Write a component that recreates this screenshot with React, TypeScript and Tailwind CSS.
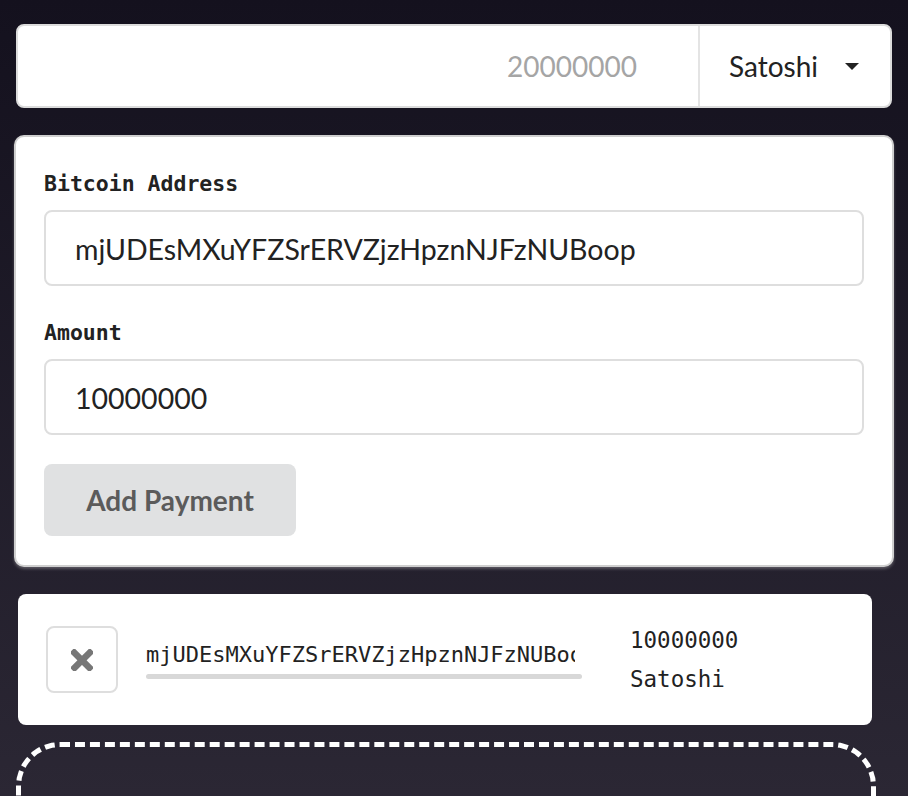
const lato = { fontFamily: "Lato, 'Noto Sans', sans-serif" };

const ADDRESS = "mjUDEsMXuYFZSrERVZjzHpznNJFzNUBoop";

function Field({ label, value }: { label: string; value: string }) {
  return (
    <div className="flex flex-col gap-[13px]">
      <label className="font-['DejaVu_Sans_Mono',monospace] font-bold text-[21.5px] leading-[26px] text-[#222]">
        {label}
      </label>
      <div className="h-[76px] rounded-[8px] border-2 border-[#dedede] flex items-center px-[29px] pt-[3px] font-['Lato',sans-serif] text-[28.5px] text-[#222]">
        {value}
      </div>
    </div>
  );
}

function RemoveIcon() {
  return (
    <svg width="22" height="22" viewBox="0 0 22 22" fill="#777">
      <rect x="-3" y="8" width="28" height="6.5" rx="1" transform="rotate(45 11 11)" />
      <rect x="-3" y="8" width="28" height="6.5" rx="1" transform="rotate(-45 11 11)" />
    </svg>
  );
}

export default function App() {
  return (
    <div className="min-h-[796px] h-[796px] bg-gradient-to-b from-[#14111e] to-[#2b2734] px-[16px] pt-[24px] overflow-hidden">
      {/* amount + unit */}
      <div className="h-[84px] w-[876px] rounded-[8px] border-2 border-[#dcdcdc] bg-white flex" style={lato}>
        <div className="flex-1 flex items-center justify-end pr-[61px] text-[28px] text-[#a5a5a5]">
          20000000
        </div>
        <div className="w-[192px] border-l-2 border-[#e4e4e4] flex items-center pl-[29px] gap-[27px] text-[28px] text-[#222]">
          <span>Satoshi</span>
          <span className="w-0 h-0 border-l-[7px] border-r-[7px] border-t-[7px] border-l-transparent border-r-transparent border-t-[#222]" />
        </div>
      </div>

      {/* new payment form */}
      <div className="mt-[27px] -ml-[2px] w-[880px] rounded-[10px] border-2 border-[#cfcfcf] bg-white shadow-[0_2px_3px_rgba(255,255,255,0.25)] px-[28px] pt-[34px] pb-[29px] flex flex-col">
        <div className="flex flex-col gap-[34px]">
          <Field label="Bitcoin Address" value={ADDRESS} />
          <Field label="Amount" value="10000000" />
        </div>
        <button
          className="mt-[29px] w-[252px] h-[72px] rounded-[8px] bg-[#e0e1e2] text-[#5b5b5b] font-bold text-[28px]"
          style={lato}
        >
          Add Payment
        </button>
      </div>

      {/* payment list */}
      <div className="mt-[27px] flex gap-[17px]">
        <div className="flex flex-col gap-[17px]">
          <div className="w-[854px] h-[131px] ml-[2px] rounded-[8px] bg-white flex items-center pl-[28px] pr-[20px] gap-[28px]">
            <button className="w-[72px] h-[67px] shrink-0 rounded-[8px] border-2 border-[#dedede] flex items-center justify-center">
              <RemoveIcon />
            </button>
            <div className="w-[436px] shrink-0 flex flex-col gap-[5px]">
              <div className="w-[429px] overflow-hidden whitespace-nowrap font-['DejaVu_Sans_Mono',monospace] text-[22px] leading-[28px] text-[#222]">
                {ADDRESS}
              </div>
              <div className="h-[5px] w-[436px] rounded-full bg-[#d8d8d8]" />
            </div>
            <div className="ml-[20px] font-['DejaVu_Sans_Mono',monospace] text-[22.5px] leading-[39px] text-[#222]">
              <div>10000000</div>
              <div>Satoshi</div>
            </div>
          </div>
          <div className="w-[860px] h-[120px] rounded-[44px] border-[5px] border-dashed border-white" />
        </div>
        <div className="w-[3px] h-[220px] bg-white" />
      </div>
    </div>
  );
}
